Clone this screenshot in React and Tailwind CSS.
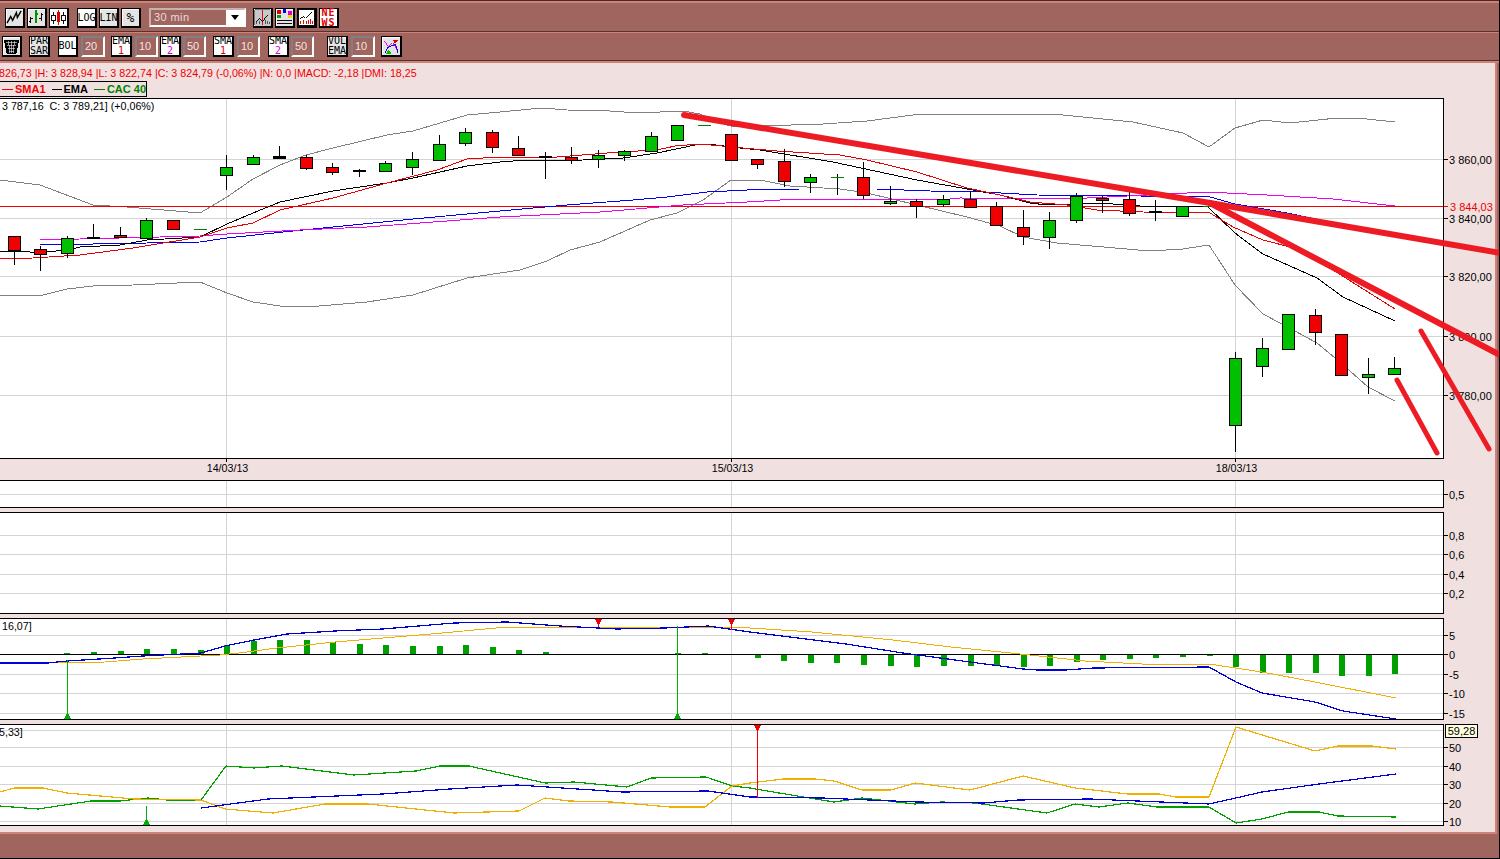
const candles = [
  [14, 236, 265, 236, 250, "r"], [40, 246, 271, 249, 254, "r"], [67, 236, 258, 238, 253, "g"],
  [93, 224, 238, 237, 238, "r"], [120, 227, 237, 235, 237, "r"], [146, 218, 238, 220, 238, "g"],
  [173, 220, 229, 220, 229, "r"], [200, 229, 229, 229, 229, "d"], [226, 155, 190, 167, 175, "g"],
  [253, 155, 164, 157, 164, "g"], [279, 146, 159, 156, 158, "k"], [306, 155, 170, 157, 168, "r"],
  [332, 163, 175, 167, 172, "r"], [359, 169, 177, 170, 171, "k"], [385, 161, 171, 163, 171, "g"],
  [412, 152, 175, 159, 167, "g"], [439, 135, 160, 144, 160, "g"], [465, 128, 146, 132, 143, "g"],
  [492, 130, 153, 132, 147, "r"], [518, 136, 155, 148, 155, "r"], [545, 152, 179, 156, 157, "k"],
  [571, 147, 164, 157, 160, "r"], [598, 150, 168, 155, 159, "g"], [624, 150, 161, 151, 155, "g"],
  [651, 132, 151, 136, 151, "g"], [677, 125, 140, 125, 140, "g"], [704, 125, 125, 125, 125, "d"],
  [731, 134, 161, 134, 160, "r"], [757, 159, 169, 159, 164, "r"], [784, 149, 187, 161, 181, "r"],
  [810, 174, 193, 177, 182, "g"], [837, 174, 195, 177, 177, "d"], [863, 162, 199, 177, 195, "r"],
  [890, 186, 205, 201, 203, "g"], [916, 199, 218, 201, 206, "r"], [943, 195, 207, 199, 204, "g"],
  [970, 191, 208, 199, 207, "r"], [996, 202, 225, 206, 225, "r"], [1023, 210, 245, 227, 236, "r"],
  [1049, 212, 249, 220, 237, "g"], [1076, 193, 223, 196, 220, "g"], [1102, 196, 213, 198, 200, "r"],
  [1129, 188, 216, 199, 213, "r"], [1155, 200, 221, 211, 212, "k"], [1182, 206, 216, 206, 216, "g"],
  [1209, 206, 206, 206, 206, "d"], [1235, 352, 452, 358, 425, "g"], [1262, 338, 377, 348, 366, "g"],
  [1288, 314, 350, 314, 349, "g"], [1315, 309, 345, 315, 332, "r"], [1341, 334, 376, 334, 375, "r"],
  [1368, 358, 394, 374, 377, "g"], [1394, 357, 374, 368, 374, "g"],
];

const bbUp = "0,180 40,185 93,205 127,207 200,213 227,197 253,179 280,165 306,155 333,148 387,135 413,131 467,115 500,112 542,108 567,110 610,111 638,113 683,111 700,114 720,123 731,126 760,126 823,124 867,121 913,115 930,114 983,114 1053,114 1133,122 1183,133 1209,147 1235,128 1263,120 1290,123 1337,118 1367,119 1395,122";
const bbDown = "0,295 43,295 67,289 93,286 133,285 200,282 227,293 253,302 280,306 307,307 367,302 413,295 467,278 500,273 520,270 547,261 570,250 600,242 650,220 677,213 703,200 731,180 760,180 790,186 840,189 867,193 917,205 967,217 1000,226 1023,237 1057,243 1150,251 1183,249 1209,245 1235,285 1263,314 1293,330 1317,343 1341,363 1368,387 1395,401";
const ema = "0,251 27,251 33,253 67,250 80,247 120,245 147,240 200,237 227,224 253,213 280,202 333,191 387,183 413,178 467,166 500,162 513,161 583,160 623,158 657,153 700,144 708,144 740,148 760,150 833,162 917,180 973,190 1000,195 1030,203 1047,205 1070,204 1100,203 1140,206 1207,206 1235,233 1263,254 1317,278 1343,297 1395,321";
const sma = "0,259 33,258 80,255 133,248 200,237 227,228 253,223 280,210 333,198 387,183 437,170 467,159 500,157 557,157 620,152 657,150 675,146 700,144 743,148 777,151 840,155 867,160 917,172 967,188 1000,195 1030,202 1067,205 1097,210 1143,212 1210,213 1233,227 1263,240 1290,247 1333,270 1395,309";
const blue = "40,245 200,242 227,238 283,232 333,227 413,219 500,211 567,205 633,200 667,197 707,192 747,190 800,189 877,189 930,191 983,192 1037,195 1140,196 1210,197 1235,204 1287,213 1330,222";
const pink = "40,240 200,236 227,234 300,230 367,227 500,217 600,212 683,205 747,202 797,199 950,199 960,198 1067,199 1167,194 1207,192 1267,195 1333,199 1395,206";

const macdBlue = "0,663 48,663 67,661 115,658 143,656 201,653 225,646 254,640 287,634 335,631 383,629 454,623 507,622 560,626 598,628 617,629 665,628 708,626 750,632 846,644 903,653 970,662 1023,669 1037,670 1066,670 1094,668 1209,667 1236,682 1262,693 1315,702 1343,711 1396,719";
const macdOrange = "0,662 48,663 105,662 143,659 220,655 239,653 277,648 335,642 431,634 507,627 540,627 750,628 812,632 893,640 951,647 1011,653 1085,661 1142,664 1209,664 1262,672 1315,682 1396,698";
const macdUp = [[67, 653], [94, 652], [121, 651], [147, 649], [174, 649], [201, 650], [227, 645], [254, 641], [280, 640], [307, 640], [333, 642], [360, 644], [386, 645], [413, 646], [440, 646], [466, 645], [493, 647], [519, 650], [546, 652], [678, 653], [705, 653]];
const macdDown = [[732, 655], [758, 658], [784, 661], [811, 663], [837, 663], [864, 665], [891, 666], [917, 667], [944, 666], [971, 666], [997, 665], [1024, 667], [1050, 666], [1077, 662], [1103, 660], [1130, 659], [1156, 658], [1183, 657], [1210, 656], [1236, 667], [1263, 673], [1289, 673], [1316, 673], [1342, 676], [1369, 676], [1395, 674]];

const dmiGreen = "0,806 38,809 91,801 120,801 148,798 167,800 201,800 226,766 254,768 282,766 354,775 416,771 440,766 469,766 545,783 574,782 627,787 651,778 706,777 732,786 750,788 779,793 834,802 862,798 915,804 941,802 975,803 1047,813 1075,804 1099,807 1128,803 1157,807 1209,807 1236,823 1262,819 1288,812 1319,812 1338,816 1396,817";
const dmiOrange = "0,792 14,788 43,788 67,793 134,799 201,800 225,809 273,813 325,804 368,804 454,813 519,811 545,798 569,801 612,802 670,807 705,807 732,786 750,783 783,779 815,779 834,781 862,790 891,790 915,783 970,790 1023,776 1075,788 1128,794 1159,794 1176,797 1209,797 1236,727 1315,751 1338,746 1372,746 1396,749";
const dmiBlue = "201,808 268,799 383,794 450,789 517,785 593,790 622,792 708,791 750,797 822,798 917,802 984,803 1018,800 1090,799 1209,804 1236,798 1262,792 1319,784 1396,774";

const Line = ({ points, color, width = 1 }) => (
  <polyline points={points} fill="none" stroke={color} strokeWidth={width} shapeRendering="crispEdges" />
);

const Candle = ({ c }) => {
  const [x, wt, wb, bt, bb, kind] = c;
  const fill = { g: "#00C000", r: "#F00000", k: "#000000" }[kind];
  return (
    <g shapeRendering="crispEdges">
      {wt !== wb && <line x1={x + 0.5} x2={x + 0.5} y1={wt} y2={wb} stroke="#000" />}
      {kind === "d" ? (
        <line x1={x - 6} x2={x + 7} y1={bt + 0.5} y2={bt + 0.5} stroke="#008000" />
      ) : (
        <rect x={x - 5.5} y={bt + 0.5} width={12} height={Math.max(bb - bt, 1)} fill={fill} stroke="#000" />
      )}
    </g>
  );
};

const Panel = ({ top, boxClass, height, grid, children, axis, axisExtra }) => (
  <div className="flex">
    <div className={`w-[1444px] shrink-0 border border-l-0 border-black bg-white ${boxClass}`}>
      <svg width={1443} height={height} viewBox={`0 ${top + 1} 1443 ${height}`} className="block">
        {[226, 731, 1235].map((x) => (
          <line key={x} x1={x + 0.5} x2={x + 0.5} y1={top} y2={top + height + 2} stroke="#D4D4D4" shapeRendering="crispEdges" />
        ))}
        {grid.map((y) => (
          <line key={y} x1={0} x2={1443} y1={y + 0.5} y2={y + 0.5} stroke="#D4D4D4" shapeRendering="crispEdges" />
        ))}
        {children}
      </svg>
    </div>
    <svg width={51} height={height + 2} viewBox={`1444 ${top} 51 ${height + 2}`} className="block shrink-0">
      {axis.map(([y, label]) => (
        <g key={label}>
          <line x1={1444} x2={1448} y1={y + 0.5} y2={y + 0.5} stroke="#000" shapeRendering="crispEdges" />
          <text x={1449} y={y + 4.5} fontSize="11" fill="#000" fontFamily="'Liberation Sans', sans-serif">{label}</text>
        </g>
      ))}
      {axisExtra}
    </svg>
  </div>
);

const Btn = ({ w = "w-[20px]", h = "h-[20px]", bg = "bg-[#E4E4E4]", className = "", children }) => (
  <div className={`${w} ${h} ${bg} ${className} flex shrink-0 flex-col items-center justify-center border border-r-2 border-b-2 border-black text-[10px] leading-[10px] text-black shadow-[inset_1px_1px_0_#fff] font-['DejaVu_Sans_Mono',monospace]`}>
    {children}
  </div>
);

const ValueInput = ({ value, w = "w-[24px]", className = "" }) => (
  <div className={`${w} ${className} flex h-[21px] shrink-0 items-center border-2 border-[#808080] border-r-white border-b-white pl-[2px] text-[11px] text-[#F0E4E4] font-['Liberation_Sans',sans-serif]`}>
    {value}
  </div>
);

const Avg = ({ name, n, color, className = "" }) => (
  <Btn w="w-[21px]" h="h-[21px]" bg="bg-white" className={className}>
    <span>{name}</span>
    <span className={color}>{n}</span>
  </Btn>
);

const Icon = ({ children }) => (
  <svg width="17" height="17" viewBox="0 0 18 18" shapeRendering="crispEdges">{children}</svg>
);

const Toolbar = () => (
  <div className="h-[63px] shrink-0">
    <div className="h-[3px] border-t border-[#4A2A26] bg-[#CF8279]" />
    <div className="flex h-[29px] items-start border-b border-[#5A302B] pl-[5px] pt-[5px]">
      <div className="flex gap-[2px]">
        <Btn>
          <Icon><polyline points="1,15 5,8 7,12 11,4 12,9 16,2" fill="none" stroke="#000" strokeWidth="1.5" shapeRendering="auto" /></Icon>
        </Btn>
        <Btn>
          <Icon>
            <path d="M3 8v7M1 13h2M3 10h2M14 4v9M12 10h2M14 6h2" stroke="#000" fill="none" />
            <path d="M8.5 1v14M7 12h1M9 5h2" stroke="#009000" strokeWidth="2" fill="none" />
          </Icon>
        </Btn>
        <Btn bg="bg-white">
          <Icon>
            <path d="M3.5 3v13M14.5 3v13" stroke="#000" />
            <rect x="1.5" y="6.5" width="4" height="6" fill="#fff" stroke="#000" />
            <rect x="12.5" y="6.5" width="4" height="6" fill="#fff" stroke="#000" />
            <path d="M9 1v16" stroke="#E00000" />
            <rect x="7" y="3" width="4" height="11" fill="#E00000" />
          </Icon>
        </Btn>
      </div>
      <div className="ml-[8px] flex gap-[2px]">
        <Btn bg="bg-white">LOG</Btn>
        <Btn>LIN</Btn>
        <Btn className="text-[13px]">%</Btn>
      </div>
      <div className="ml-[8px] flex h-[19px] w-[97px] items-center border-2 border-[#C8B0AE] border-r-white border-b-white">
        <span className="flex-1 pl-[3px] text-[11px] tracking-[0.4px] text-[#EADADA] font-['Liberation_Sans',sans-serif]">30 min</span>
        <div className="flex h-full w-[18px] items-center justify-center bg-white">
          <svg width="8" height="5" viewBox="0 0 8 5"><path d="M0 0h8L4 5z" fill="#000" /></svg>
        </div>
      </div>
      <div className="ml-[7px] flex gap-[2px]">
        <Btn bg="bg-[#C8C8C8]">
          <Icon>
            <path d="M1 17V1h16" stroke="#707070" fill="none" />
            <path d="M9.5 1v16" stroke="#E00000" />
            <path d="M2 14l4-4 3 3 6-7" stroke="#000" fill="none" />
            <path d="M3 16v-2M6 16v-3M12 16v-4M14 16v-3M16 16v-2" stroke="#505050" />
          </Icon>
        </Btn>
        <Btn bg="bg-[#E4E4E4]">
          <Icon>
            <rect x="1" y="1" width="4" height="4" fill="#E00000" />
            <rect x="7" y="0" width="4" height="4" fill="#0000E0" />
            <rect x="13" y="2" width="4" height="4" fill="#E000E0" />
            <rect x="1" y="6" width="4" height="3" fill="#00A000" />
            <rect x="13" y="6" width="4" height="3" fill="#E8E000" />
            <path d="M1 12h16M1 15h16" stroke="#000" />
          </Icon>
        </Btn>
        <Btn bg="bg-white">
          <Icon>
            <rect x="0.5" y="0.5" width="17" height="17" fill="#fff" stroke="#000" />
            <path d="M2 10l4-2 2 2 7-7" stroke="#000" fill="none" />
            <path d="M3 16v-3M6 16v-4M9 16v-3M11 16v-4M13 16v-5M15 16v-3" stroke="#E00000" />
          </Icon>
        </Btn>
        <Btn bg="bg-white" className="text-[9px] leading-[8px] font-bold tracking-[1px]">
          <span className="text-[#E00000]">NE</span>
          <span className="text-[#E00000]">WS</span>
        </Btn>
      </div>
    </div>
    <div className="flex h-[28px] items-start border-t border-[#CF8279] pl-[2px] pt-[3px]">
      <Btn w="w-[20px]" h="h-[21px]" bg="bg-[#E4E4E4]">
        <Icon>
          <path d="M1 2h16l-3 15H4z" fill="#000" />
          <path d="M3 5h12M4 8h10M5 11h8M6 14h6M6 3l1 13M9 3v13M12 3l-1 13" stroke="#fff" strokeWidth="0.6" />
        </Icon>
      </Btn>
      <Btn w="w-[21px]" h="h-[21px]" className="ml-[7px]"><span>PAR</span><span>SAR</span></Btn>
      <Btn h="h-[21px]" bg="bg-white" className="ml-[8px]">BOL</Btn>
      <ValueInput value="20" className="ml-[3px]" />
      <Avg name="EMA" n="1" color="text-[#E00000]" className="ml-[6px]" />
      <ValueInput value="10" w="w-[23px]" className="ml-[3px]" />
      <Avg name="EMA" n="2" color="text-[#E000E0]" className="ml-[2px]" />
      <ValueInput value="50" w="w-[23px]" className="ml-[2px]" />
      <Avg name="SMA" n="1" color="text-[#E00000]" className="ml-[7px]" />
      <ValueInput value="10" w="w-[23px]" className="ml-[3px]" />
      <Avg name="SMA" n="2" color="text-[#E000E0]" className="ml-[8px]" />
      <ValueInput value="50" w="w-[23px]" className="ml-[2px]" />
      <Btn w="w-[21px]" h="h-[21px]" className="ml-[13px]"><span>VOL</span><span>EMA</span></Btn>
      <ValueInput value="10" className="ml-[3px]" />
      <Btn w="w-[21px]" h="h-[21px]" className="ml-[6px]">
        <Icon>
          <polyline points="1,3 6,9 10,5 13,9 17,14" fill="none" stroke="#E000E0" />
          <polyline points="2,16 5,10 9,8 13,6 16,16" fill="none" stroke="#0000E0" />
          <path d="M10 2h6l-3 4z" fill="#E00000" />
          <path d="M3 17h6l-3-5z" fill="#00C000" />
        </Icon>
      </Btn>
    </div>
    <div className="h-[3px] border-t border-[#5A302B] bg-[#CF8279]" />
  </div>
);

const Legend = () => (
  <div className="mb-px flex h-[16px] w-[148px] -ml-px items-center whitespace-nowrap border border-black pl-[2px] text-[11px] font-bold font-['Liberation_Sans',sans-serif]">
    <span className="h-px w-[11px] bg-[#F00000]" />
    <span className="ml-[2px] text-[#F00000]">SMA1</span>
    <span className="ml-[6px] h-px w-[11px] bg-black" />
    <span className="ml-px text-black">EMA</span>
    <span className="ml-[6px] h-px w-[11px] bg-[#008000]" />
    <span className="ml-[2px] text-[#008000]">CAC 40</span>
  </div>
);

const MainChart = () => (
  <Panel
    top={98}
    height={359}
    boxClass="h-[361px]"
    grid={[159, 218, 276, 336, 395]}
    axis={[[159, "3 860,00"], [218, "3 840,00"], [276, "3 820,00"], [336, "3 800,00"], [395, "3 780,00"]]}
    axisExtra={
      <g>
        <line x1={1444} x2={1448} y1={206.5} y2={206.5} stroke="#F00000" shapeRendering="crispEdges" />
        <text x={1450} y={210.5} fontSize="11" fill="#F00000" fontFamily="'Liberation Sans', sans-serif">3 844,03</text>
      </g>
    }
  >
    <Line points={bbUp} color="#808080" />
    <Line points={bbDown} color="#808080" />
    <line x1={0} x2={1443} y1={206.5} y2={206.5} stroke="#F00000" shapeRendering="crispEdges" />
    <Line points={blue} color="#0000F0" />
    <Line points={pink} color="#F000F0" />
    <Line points={ema} color="#000" />
    <Line points={sma} color="#E80000" />
    {candles.map((c) => <Candle key={c[0]} c={c} />)}
    <text x={2} y={110} fontSize="10.7" fill="#000" xmlSpace="preserve" fontFamily="'Liberation Sans', sans-serif">3 787,16  C: 3 789,21] (+0,06%)</text>
  </Panel>
);

const DateAxis = () => (
  <svg width={1444} height={21} viewBox="0 459 1444 21" className="block">
    {[[226, "14/03/13"], [731, "15/03/13"], [1235, "18/03/13"]].map(([x, label]) => (
      <g key={label}>
        <line x1={x + 0.5} x2={x + 0.5} y1={459} y2={462} stroke="#000" shapeRendering="crispEdges" />
        <text x={x + 1.5} y={472} textAnchor="middle" fontSize="10.7" fill="#000" fontFamily="'Liberation Sans', sans-serif">{label}</text>
      </g>
    ))}
  </svg>
);

const Marker = ({ x, from, to, up }) => (
  <g shapeRendering="crispEdges">
    <line x1={x + 0.5} x2={x + 0.5} y1={from} y2={to} stroke={up ? "#00B000" : "#F00000"} />
    {up ? (
      <path d={`M${x - 3} ${to + 1}h7l-3.5 -7z`} fill="#00B000" />
    ) : (
      <path d={`M${x - 3} ${from}h7l-3.5 7z`} fill="#F00000" />
    )}
  </g>
);

const MacdChart = () => (
  <Panel
    top={618}
    height={100}
    boxClass="h-[102px]"
    grid={[635, 674, 693, 713]}
    axis={[[635, "5"], [654, "0"], [674, "-5"], [693, "-10"], [713, "-15"]]}
  >
    {macdUp.map(([x, y]) => <rect key={x} x={x - 3} y={y} width={6} height={654 - y} fill="#00A000" shapeRendering="crispEdges" />)}
    {macdDown.map(([x, y]) => <rect key={x} x={x - 3} y={654} width={6} height={y - 654} fill="#00A000" shapeRendering="crispEdges" />)}
    <line x1={0} x2={1443} y1={654.5} y2={654.5} stroke="#000" shapeRendering="crispEdges" />
    <Line points={macdOrange} color="#F0B000" />
    <Line points={macdBlue} color="#0000D8" width={1.2} />
    <Marker x={67} from={660} to={718} up />
    <Marker x={677} from={626} to={718} up />
    <Marker x={598} from={619} to={627} />
    <Marker x={731} from={619} to={630} />
    <text x={2} y={630} fontSize="10.7" fill="#000" fontFamily="'Liberation Sans', sans-serif">16,07]</text>
  </Panel>
);

const DmiChart = () => (
  <div className="relative">
    <Panel
      top={724}
      height={100}
      boxClass="h-[102px]"
      grid={[730, 747, 766, 784, 803, 821]}
      axis={[[747, "50"], [766, "40"], [784, "30"], [803, "20"], [821, "10"]]}
    >
      <Line points={dmiGreen} color="#00A000" width={1.2} />
      <Line points={dmiOrange} color="#F0B000" width={1.2} />
      <Line points={dmiBlue} color="#0000D8" width={1.2} />
      <Marker x={146} from={806} to={824} up />
      <Marker x={757} from={725} to={798} />
      <text x={-1} y={736} fontSize="10.7" fill="#000" fontFamily="'Liberation Sans', sans-serif">5,33]</text>
    </Panel>
    <div className="absolute left-[1445px] top-0 flex h-[14px] w-[33px] items-center justify-center border border-black bg-[#FFFFE1] text-[11px] text-black font-['Liberation_Sans',sans-serif]">59,28</div>
  </div>
);

const HandLines = () => (
  <svg width="1500" height="859" viewBox="0 0 1500 859" className="pointer-events-none absolute left-0 top-0">
    <g fill="none" stroke="#ED1C24" strokeLinecap="round" strokeLinejoin="round">
      <polyline points="684,115 1210,203 1500,253" strokeWidth="6" />
      <polyline points="1210,203 1395,300 1500,355" strokeWidth="6" />
      <polyline points="1421,331 1489,449" strokeWidth="5" />
      <polyline points="1397,380 1437,453" strokeWidth="5" />
    </g>
  </svg>
);

export default function App() {
  return (
    <div className="relative flex h-[859px] w-[1500px] flex-col overflow-hidden border-r border-b border-black bg-[#A0655F]">
      <Toolbar />
      <div className="mr-[2px] h-[771px] shrink-0 border-r-2 border-b-2 border-[#CF8279] bg-[#F0E0E0]">
        <div className="flex h-[18px] items-center whitespace-nowrap pt-[2px] text-[10.7px] text-[#F00000] -ml-px font-['Liberation_Sans',sans-serif]">
          826,73 |H: 3 828,94 |L: 3 822,74 |C: 3 824,79 (-0,06%) |N: 0,0 |MACD: -2,18 |DMI: 18,25
        </div>
        <Legend />
        <MainChart />
        <DateAxis />
        <div className="flex flex-col gap-[4px]">
          <Panel top={480} height={26} boxClass="h-[28px]" grid={[494]} axis={[[494, "0,5"]]} />
          <Panel
            top={512}
            height={100}
            boxClass="h-[102px]"
            grid={[535, 554, 574, 593]}
            axis={[[535, "0,8"], [554, "0,6"], [574, "0,4"], [593, "0,2"]]}
          />
          <MacdChart />
          <DmiChart />
        </div>
      </div>
      <HandLines />
    </div>
  );
}
